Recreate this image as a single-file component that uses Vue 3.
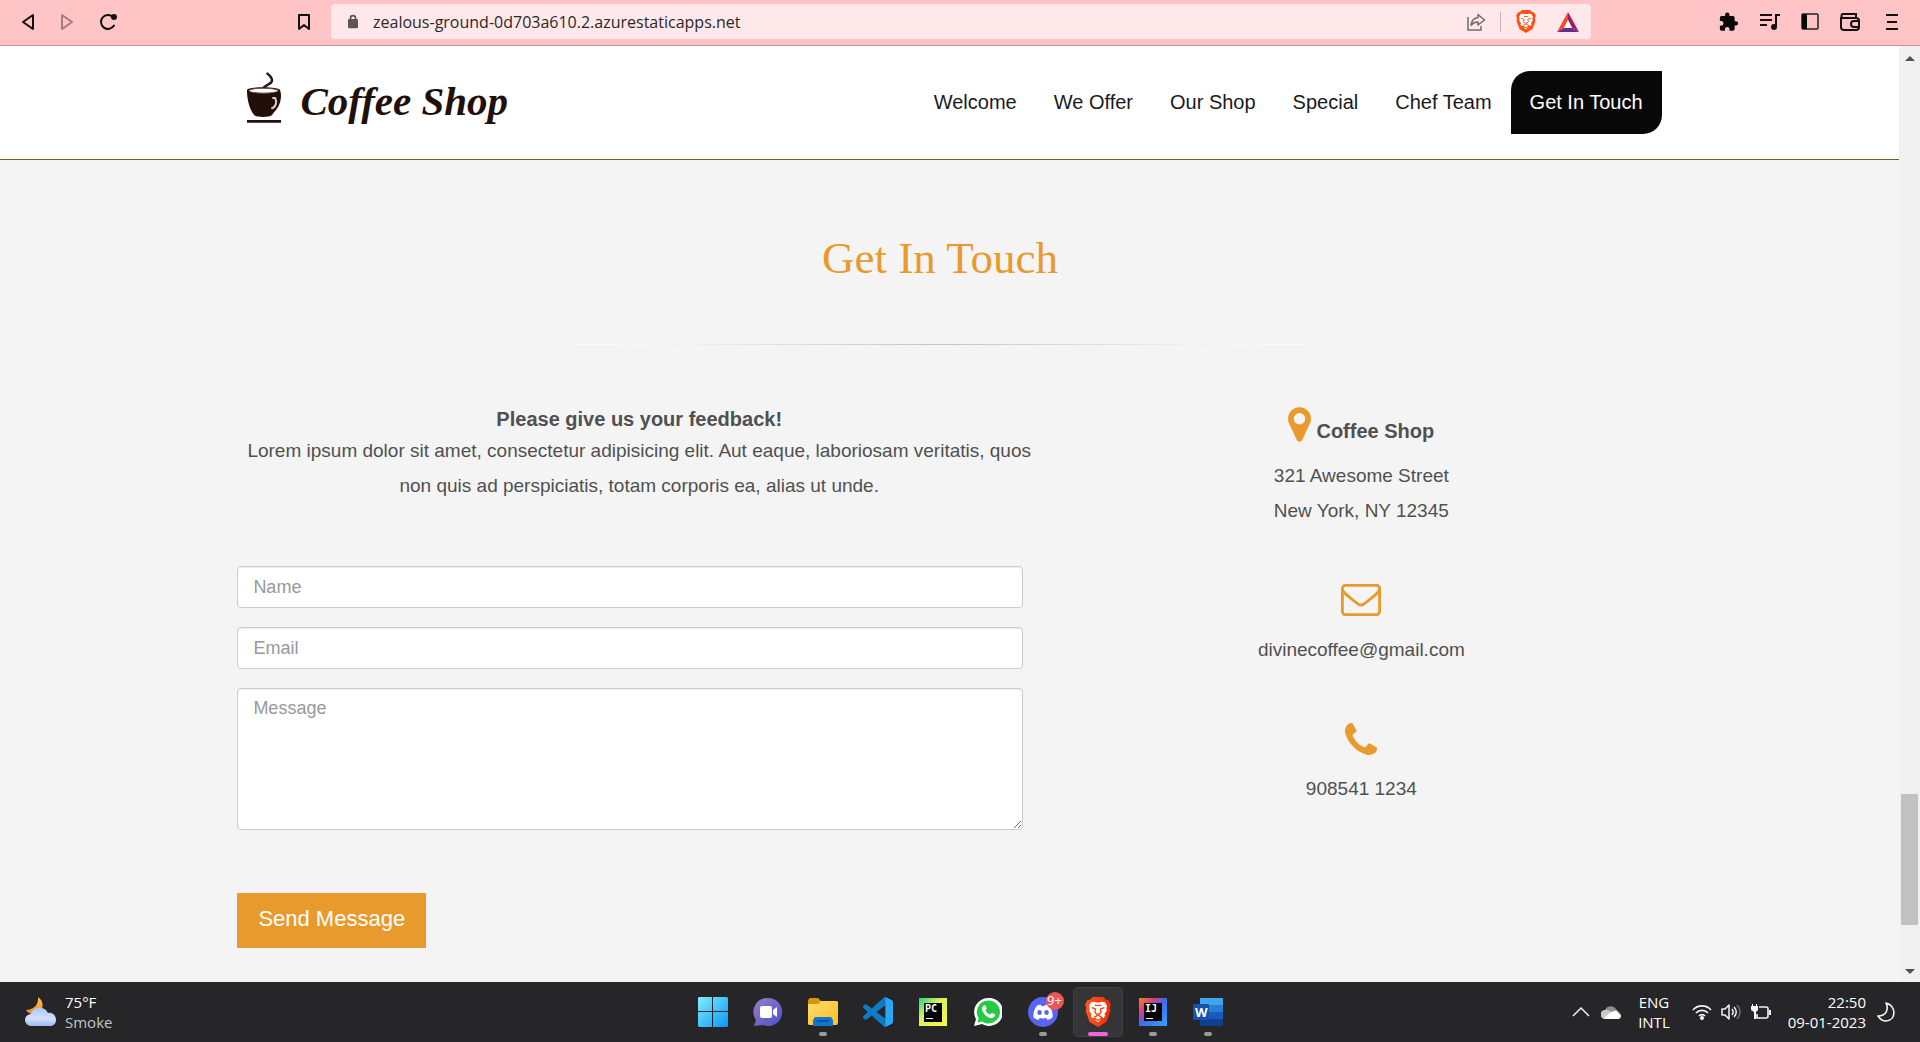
<script setup>
import { ref } from 'vue'

const address = ref('zealous-ground-0d703a610.2.azurestaticapps.net')
const form = ref({ name: '', email: '', message: '' })
const links = ['Welcome', 'We Offer', 'Our Shop', 'Special', 'Chef Team', 'Get In Touch']
const current = 'Get In Touch'
</script>

<template>
  <div class="screen">
    <svg class="defs" aria-hidden="true">
      <defs>
        <linearGradient id="winGrad" x1="0" y1="0" x2="1" y2="1"><stop offset="0" stop-color="#7ff0ff" /><stop offset="1" stop-color="#0a95f5" /></linearGradient>
        <linearGradient id="chatGrad" x1="0" y1="0" x2="1" y2="1"><stop offset="0" stop-color="#9a7fc4" /><stop offset="1" stop-color="#4a50c8" /></linearGradient>
        <linearGradient id="folderGrad" x1="0" y1="0" x2="1" y2="1"><stop offset="0" stop-color="#ffdc70" /><stop offset="1" stop-color="#fdbe22" /></linearGradient>
        <linearGradient id="pcGrad" x1="0" y1="0" x2="1" y2="1"><stop offset="0" stop-color="#21d789" /><stop offset=".4" stop-color="#d8f05a" /><stop offset="1" stop-color="#fcf84a" /></linearGradient>
        <linearGradient id="ijGrad" x1="0" y1="0" x2="1" y2="1"><stop offset="0" stop-color="#fc801d" /><stop offset=".3" stop-color="#d63b8c" /><stop offset=".5" stop-color="#3b6cf0" /><stop offset="1" stop-color="#3aa0ff" /></linearGradient>
        <linearGradient id="braveGrad" x1="0" y1="0" x2="1" y2="0"><stop offset="0" stop-color="#ff5a1f" /><stop offset="1" stop-color="#f42a05" /></linearGradient>
        <linearGradient id="cloudGrad" x1="0" y1="0" x2="0" y2="1"><stop offset="0" stop-color="#a9c6f7" /><stop offset=".6" stop-color="#d3e0fb" /><stop offset="1" stop-color="#9db9ee" /></linearGradient>
        <linearGradient id="moonGrad" x1="0" y1="0" x2="0" y2="1"><stop offset="0" stop-color="#f9c24e" /><stop offset="1" stop-color="#f18a2b" /></linearGradient>
        <symbol id="lion" viewBox="0 0 24 28">
          <path fill="#fff" d="M8 4.500 12 5.300l4-.8 2.500.5 2 3.500-.8 2 .5 2-2.200 3.500.8 1.500-1.800 2-2-.8-1.500 1 1.500 1.300L12 23.500l-3-2 1.500-1.500-1.500-1-2 .8-1.800-2 .8-1.500L3.800 12.500l.5-2-.8-2L5.500 5z" />
          <path fill="none" stroke="currentColor" stroke-width="1.200" d="m6 10 3.800 1.200L9 14l2 2.500M18 10l-3.800 1.200L15 14l-2 2.500M9 7.500l3 .6 3-.6M8.500 18.800 12 17l3.500 1.800M12 17v-2M9.500 20.600l2.500 1.200 2.500-1.200" />
        </symbol>
      </defs>
    </svg>

    <header class="toolbar">
      <div class="toolbar-nav">
        <button class="icon-btn" aria-label="Back"><svg width="14" height="18" viewBox="0 0 14 18"><path d="M12 2v14L2 9z" fill="none" stroke="#111" stroke-width="2" stroke-linejoin="round" /></svg></button>
        <button class="icon-btn" aria-label="Forward"><svg width="14" height="18" viewBox="0 0 14 18"><path d="M2 2v14l10-7z" fill="none" stroke="#a57b7f" stroke-width="2" stroke-linejoin="round" /></svg></button>
        <button class="icon-btn" aria-label="Reload"><svg width="18" height="18" viewBox="0 0 18 18"><path d="M15 12.500A7 7 0 1 1 14 4" fill="none" stroke="#111" stroke-width="2" stroke-linecap="round" /><circle cx="15" cy="4" r="3" fill="#111" /></svg></button>
      </div>
      <button class="icon-btn" aria-label="Bookmark this page"><svg width="14" height="18" viewBox="0 0 14 18"><path d="M2 2h10v14l-5-4-5 4z" fill="none" stroke="#111" stroke-width="2" stroke-linejoin="round" /></svg></button>
      <div class="address">
        <svg width="10" height="15" viewBox="0 0 12 16"><rect y="5" width="12" height="11" rx="1" fill="#5b5558" /><path d="M3 6V4a3 3 0 0 1 6 0v2" fill="none" stroke="#5b5558" stroke-width="2" /></svg>
        <input v-model="address" class="address-input" type="text" aria-label="Address" />
        <button class="icon-btn" aria-label="Share"><svg width="20" height="20" viewBox="0 0 20 20" fill="none" stroke="#75696b" stroke-width="1.500"><path d="M2 5v13h13v-4" /><path d="M12 2.500 18.500 8 12 13v-3c-3 0-5 .8-7 3.200C5.500 9 8 6 12 5.500z" stroke-linejoin="round" /></svg></button>
        <span class="address-sep"></span>
        <button class="icon-btn" aria-label="Brave Shields"><svg width="20" height="23" viewBox="0 0 24 28" color="#fb542b"><path fill="#fb5210" d="m7 0h10l2.500 2.500L22 3l2 4-1 3 .5 3-3.500 10-8 5-8-5L.5 13 1 10 0 7l2-4 2.500-.5z" /><use href="#lion" /></svg></button>
        <button class="icon-btn" aria-label="Brave Rewards"><svg width="22" height="20" viewBox="0 0 22 20"><path fill="#ff4724" d="M11 0 0 20l7-4 4-8z" /><path fill="#9e1f63" d="m11 0 11 20-7-4-4-8z" /><path fill="#662d91" d="M0 20h22l-7-4H7z" /><path fill="#fff" d="m11 8 4 8H7z" /></svg></button>
      </div>
      <div class="toolbar-tools">
        <button class="icon-btn" aria-label="Extensions"><svg width="20" height="20" viewBox="1 1 23 22"><path fill="#080808" d="M20.500 11H19V7a2 2 0 0 0-2-2h-4V3.500a2.500 2.500 0 0 0-5 0V5H4a2 2 0 0 0-2 2v3.800h1.500a2.700 2.700 0 0 1 0 5.400H2V20a2 2 0 0 0 2 2h3.800v-1.500a2.700 2.700 0 0 1 5.400 0V22H17a2 2 0 0 0 2-2v-4h1.500a2.500 2.500 0 0 0 0-5z" /></svg></button>
        <button class="icon-btn" aria-label="Media controls"><svg width="20" height="18" viewBox="0 0 20 18"><path d="M0 2h12M0 7h12M0 12h7M20 2h-4v11" fill="none" stroke="#111" stroke-width="2" /><circle cx="14" cy="14" r="3" fill="#111" /></svg></button>
        <button class="icon-btn" aria-label="Sidebar"><svg width="18" height="17" viewBox="0 0 18 17"><rect x="1" y="1" width="16" height="15" rx="1" fill="none" stroke="#222" stroke-width="1.500" /><path d="M1 1h5v15H1z" fill="#080808" /></svg></button>
        <button class="icon-btn" aria-label="Wallet"><svg width="20" height="18" viewBox="0 0 20 18" fill="none" stroke="#111" stroke-width="2"><path d="M1 4v10a3 3 0 0 0 3 3h12a3 3 0 0 0 3-3V8a3 3 0 0 0-3-3H3C1 5 1 1 3 1h13v4" /><path d="M19 8h-5a3 3 0 0 0 0 6h5" /></svg></button>
        <button class="icon-btn" aria-label="Menu"><svg width="12" height="18" viewBox="0 0 12 18"><path d="M0 2h12M1 9h10M0 16h12" stroke="#111" stroke-width="2" /></svg></button>
      </div>
    </header>

    <div class="viewport">
      <div class="page">
        <div class="site-header">
          <div class="container site-bar">
            <a class="logo" href="#">
              <svg width="37" height="52" viewBox="0 0 38 52"><path d="M22 1c5 4 7 8 1 11-4 2-5 3-6 5" fill="none" stroke="#2a1612" stroke-width="2.500" stroke-linecap="round" /><path fill="#210f0a" d="M1 18c0-4 34-4 34 0 2 5 1 14-4 20-2 2-3 4-5 6-3 2-14 2-17 0C4 39 1 28 1 18z" /><ellipse cx="18" cy="18.500" rx="15" ry="2.500" fill="#fff" stroke="#5d4a45" /><path d="M27 26h3c2 4 1 9-4 11" fill="none" stroke="#d9cfcc" stroke-width="2" /><path d="M1 50h35" stroke="#210f0a" stroke-width="3" /></svg>
              <span>Coffee Shop</span>
            </a>
            <nav class="menu">
              <a v-for="link in links" :key="link" href="#" :class="{ active: link === current }">{{ link }}</a>
            </nav>
          </div>
        </div>

        <section class="container contact">
          <h1>Get In Touch</h1>
          <hr />
          <div class="columns">
            <div class="feedback">
              <h2>Please give us your feedback!</h2>
              <p>Lorem ipsum dolor sit amet, consectetur adipisicing elit. Aut eaque, laboriosam veritatis, quos non quis ad perspiciatis, totam corporis ea, alias ut unde.</p>
              <form @submit.prevent>
                <input v-model="form.name" type="text" placeholder="Name" aria-label="Name" />
                <input v-model="form.email" type="email" placeholder="Email" aria-label="Email" />
                <textarea v-model="form.message" placeholder="Message" aria-label="Message"></textarea>
                <button class="send" type="submit">Send Message</button>
              </form>
            </div>
            <address class="details">
              <div class="detail">
                <div class="place">
                  <svg width="23" height="35" viewBox="384 128 1024 1536"><path fill="#e99a2c" d="M1152 640q0-106-75-181t-181-75-181 75-75 181 75 181 181 75 181-75 75-181zm256 0q0 109-33 179l-364 774q-16 33-47 52t-68 19-68-19-46-52L417 819q-33-70-33-179 0-212 150-362t362-150 362 150 150 362z" /></svg>
                  <strong>Coffee Shop</strong>
                </div>
                <p>321 Awesome Street<br />New York, NY 12345</p>
              </div>
              <div class="detail">
                <svg width="40" height="32" viewBox="0 0 40 32" fill="none" stroke="#e99a2c" stroke-width="2.800"><rect x="1.400" y="1.400" width="37.200" height="29.200" rx="3" /><path d="M1.500 6c2 4 8 8 13 12 4 4 7 4 11 0 5-4 11-8 13-12" /></svg>
                <p>divinecoffee@gmail.com</p>
              </div>
              <div class="detail">
                <svg width="32" height="32" viewBox="192 128 1408 1408"><path fill="#e99a2c" d="M1600 1240q0 27-10 70.500t-21 68.500q-21 50-122 106-94 51-186 51-27 0-53-3.500t-57.500-12.500-47-14.500-55.500-20.500-49-18q-98-35-175-83-127-79-264-216t-216-264q-48-77-83-175-3-9-18-49t-20.500-55.500-14.500-47-12.500-57.500-3.500-53q0-92 51-186 56-101 106-122 25-11 68.500-21t70.500-10q14 0 21 3 18 6 53 76 11 19 30 54t35 63.500 31 53.500q3 4 17.500 25t21.500 35.500 7 28.500q0 20-28.500 50t-62 55-62 53-28.500 46q0 9 5 22.500t8.500 20.500 14 24 11.500 19q76 137 174 235t235 174q2 1 19 11.500t24 14 20.500 8.500 22.500 5q18 0 46-28.500t53-62 55-62 50-28.500q14 0 28.500 7t35.500 21.500 25 17.500q25 15 53.500 31t63.500 35 54 30q70 35 76 53 3 7 3 21z" /></svg>
                <p>908541 1234</p>
              </div>
            </address>
          </div>
        </section>
      </div>
      <div class="scrollbar">
        <svg width="10" height="6" viewBox="0 0 10 6"><path d="m0 6 5-5 5 5z" fill="#505050" /></svg>
        <div class="track"><div class="thumb"></div></div>
        <svg width="10" height="6" viewBox="0 0 10 6"><path d="m0 0 5 5 5-5z" fill="#505050" /></svg>
      </div>
    </div>

    <footer class="taskbar">
      <button class="weather">
        <svg width="32" height="30" viewBox="0 0 32 30"><path fill="url(#moonGrad)" d="M13 0c6 4 6 12 1 15-4 3-10 3-13-2 7 0 13-5 12-13z" /><path fill="url(#cloudGrad)" d="M6 29a6 6 0 0 1 0-12c2-8 14-8 17-1 5-1 8 3 8 7s-3 6-6 6z" /></svg>
        <span>75°F<br /><small>Smoke</small></span>
      </button>
      <div class="apps">
        <button class="app" aria-label="Start"><svg width="30" height="30" viewBox="0 0 30 30"><path fill="url(#winGrad)" d="M1 0h13v14H0V1zM15 0h14l1 1v13H15zM0 15h14v15H1l-1-1zM15 15h15v14l-1 1H15z" /></svg></button>
        <button class="app" aria-label="Chat"><svg width="30" height="30" viewBox="0 0 30 30"><path fill="url(#chatGrad)" d="M15 1a14 14 0 1 1-5 27L1 29l2-6A14 14 0 0 1 15 1z" /><rect x="7" y="9" width="12" height="12" rx="2" fill="#fff" /><path fill="#fff" d="m20 13 4-3v10l-4-3z" /></svg></button>
        <button class="app running" aria-label="File Explorer"><svg width="30" height="28" viewBox="0 0 30 28"><path fill="#d9960d" d="M0 2 2 0h8l3 3h15v5H0z" /><path fill="url(#folderGrad)" d="M0 6h10l3-3h16l1 1v21l-1 2H1l-1-1z" /><path fill="#1276cd" d="M5 28v-6l2-3h16l2 3v6z" /><path d="M9 23h12" stroke="#074a8c" stroke-width="1.500" /></svg></button>
        <button class="app" aria-label="Visual Studio Code"><svg width="30" height="30" viewBox="0 0 24 24"><path fill="#0f7ac5" d="M23.150 2.587 18.210.21a1.500 1.500 0 0 0-1.705.29l-9.460 8.630-4.120-3.128a1 1 0 0 0-1.276.057L.327 7.261A1 1 0 0 0 .326 8.740L3.899 12 .326 15.260a1 1 0 0 0 .001 1.479L1.650 17.940a1 1 0 0 0 1.276.057l4.120-3.128 9.460 8.630a1.500 1.500 0 0 0 1.704.290l4.942-2.377A1.500 1.500 0 0 0 24 20.060V3.939a1.500 1.500 0 0 0-.850-1.352zm-5.146 14.861L10.826 12l7.178-5.448z" /><path fill="#2aa8f2" d="M18 0.200 23.150 2.600 24 4v16l-.85 1.400L18 23.800z" /></svg></button>
        <button class="app" aria-label="PyCharm"><svg width="28" height="28" viewBox="0 0 28 28"><path fill="url(#pcGrad)" d="M0 0h28v28H0z" /><path d="M5 5h18v19H5z" /><path fill="#fff" d="M7 20h7v1H7z" /><text x="6" y="14" class="tile-mark">PC</text></svg></button>
        <button class="app" aria-label="WhatsApp"><svg width="28" height="28" viewBox="0 0 28 28"><path fill="#fff" d="M14 0a14 14 0 1 1-6 26l-8 2 2-7A14 14 0 0 1 14 0z" /><path fill="#26c943" d="M14 2.500a11.500 11.500 0 1 1-6 21l-4.500 1.200 1.200-4.400A11.500 11.500 0 0 1 14 2.500z" /><path fill="#fff" d="M9.500 7.500c1-.6 1.800-.4 2.200.5l1 2.500c0 .8-1.300 1.500-1.200 2 1 2 2.500 3.300 4.500 4 .7 0 1.200-1.700 2-1.500l2.600 1.300c.8.400.4 2-.3 2.700-2 1.800-4.300 1.300-7-.3-2.700-1.800-4.300-4-5-6-.5-2 0-4 1.200-5.200z" /></svg></button>
        <button class="app running" aria-label="Discord"><svg width="30" height="30" viewBox="0 0 30 30"><circle cx="15" cy="15" r="15" fill="#5765f2" /><path fill="#fff" d="M9 8.500 12.500 7.500l1 1.500h3l1-1.500L21 8.500c3 4 4 8 3.500 12-2 1.500-3.500 2-5 2.500l-1.200-2c-2 .5-4.600.5-6.600 0l-1.200 2c-1.500-.5-3-1-5-2.500C5 16.500 6 12.500 9 8.500zM11.500 13a2.200 2.500 0 1 0 .1 0zm7 0a2.200 2.500 0 1 0 .1 0z" /></svg><span class="badge">9+</span></button>
        <button class="app running focused" aria-label="Brave"><svg width="26" height="30" viewBox="0 0 24 28" color="#f9400f"><path fill="url(#braveGrad)" d="m7 0h10l2.500 2.500L22 3l2 4-1 3 .5 3-3.500 10-8 5-8-5L.5 13 1 10 0 7l2-4 2.500-.5z" /><use href="#lion" /></svg></button>
        <button class="app running" aria-label="IntelliJ IDEA"><svg width="28" height="28" viewBox="0 0 28 28"><path fill="url(#ijGrad)" d="M0 0h28v28H0z" /><path d="M5 5h18v18H5z" /><path fill="#fff" d="M7 20h7v1H7z" /><text x="6" y="14" class="tile-mark">IJ</text></svg></button>
        <button class="app running" aria-label="Word"><svg width="30" height="28" viewBox="0 0 30 28"><path fill="#41a5ee" d="M7 0h23v7H7z" /><path fill="#2b7cd3" d="M7 7h23v7H7z" /><path fill="#185abd" d="M7 14h23v7H7z" /><path fill="#103f91" d="M7 21h23v7H7z" /><rect y="6" width="16" height="16" rx="1" fill="#1651ab" /><text x="2" y="19" class="word-mark">W</text></svg></button>
      </div>
      <div class="tray">
        <button class="icon-btn" aria-label="Show hidden icons"><svg width="18" height="10" viewBox="0 0 18 10"><path d="m1 9 8-8 8 8" fill="none" stroke="#eee" stroke-width="1.500" /></svg></button>
        <button class="icon-btn onedrive" aria-label="OneDrive"><svg width="20" height="14" viewBox="0 0 20 14"><path fill="#8d8d8f" d="M4 8a6 6 0 0 1 11-4l4 4z" /><path fill="#c9c9cb" d="M4 14a4 4 0 0 1 0-9c4-1 6 2 9 4l-4 5z" /><path fill="#fff" d="M3 13c4-3 6-6 10-7 3-1 4 1 4 2 4 0 4 6 0 6H4z" /></svg></button>
        <button class="language">ENG<br />INTL</button>
        <button class="icon-btn status" aria-label="Network, volume and battery">
          <svg width="20" height="16" viewBox="0 0 20 16" fill="none" stroke="#f4f4f4" stroke-width="1.700"><path d="M1 6a12 12 0 0 1 18 0M4 9a8 8 0 0 1 12 0M7 12a4 4 0 0 1 6 0" /><circle cx="10" cy="14" r="1.200" fill="#fff" /></svg>
          <svg width="21" height="18" viewBox="0 0 21 18" fill="none" stroke="#f4f4f4" stroke-width="1.500"><path d="M1 6h3l4-4v14l-4-4H1z" stroke-linejoin="round" /><path d="M11 6c1.500 2 1.500 4 0 6M13 4c3 3 3 7 0 10" /><path d="M16 2c4 4 4 10 0 14" stroke="#6f6f72" /></svg>
          <svg width="20" height="18" viewBox="0 0 20 18" fill="none" stroke="#f4f4f4" stroke-width="1.600"><path d="M8 4h7a2 2 0 0 1 2 2v7a2 2 0 0 1-2 2H6v-4" /><path fill="#f4f4f4" stroke="none" d="M1 1h1v2h3V1h1v2h1v4L5 9v7H3V9L0 7V3h1zM18 7h2v5h-2z" /></svg>
        </button>
        <button class="clock"><time>22:50<br />09-01-2023</time></button>
        <button class="icon-btn" aria-label="Focus assist"><svg width="18" height="20" viewBox="0 0 18 20"><path d="M9 1c10 2 11 17 0 18-4 0-6-2-8-5 8 0 11-6 8-13z" fill="none" stroke="#f4f4f4" stroke-width="1.600" stroke-linejoin="round" /></svg></button>
      </div>
    </footer>
  </div>
</template>

<style>
body { margin: 0; }
</style>

<style scoped>
.screen { display: flex; flex-direction: column; height: 100vh; overflow: hidden; font-family: "Liberation Sans", Arial, sans-serif; }
.screen * { box-sizing: border-box; }
.defs { position: absolute; width: 0; height: 0; overflow: hidden; }
svg { display: block; flex: none; }
button { font: inherit; color: inherit; background: none; border: 0; padding: 0; }
a { text-decoration: none; color: inherit; }

.toolbar { display: flex; align-items: center; flex: none; height: 46px; padding: 0 22px 2px 21px; background: #ffc4c6; border-bottom: 1px solid #c58f95; }
.toolbar-nav { display: flex; gap: 25px; margin-right: 180px; }
.address { display: flex; align-items: center; flex: 1; height: 35px; margin-left: 20px; margin-right: 128px; padding: 0 12px 0 17px; background: #ffe8e9; border-radius: 4px; }
.address-input { flex: 1; min-width: 0; margin-left: 15px; padding: 0; border: 0; outline: 0; background: none; color: #2d2729; font: 16px/24px "Open Sans", "Noto Sans", sans-serif; }
.address-sep { width: 1px; height: 20px; margin: 0 15px 0 14px; background: #c9b3b5; }
.address .icon-btn + .icon-btn { margin-left: 21px; }
.toolbar-tools { display: flex; align-items: center; gap: 21px; }
.toolbar-tools .icon-btn:last-child { margin-left: 5px; }

.viewport { display: flex; flex: 1; min-height: 0; }
.page { flex: 1; min-width: 0; overflow: hidden; background: #f4f4f4; color: #505050; }
.container { width: 75%; min-width: 1100px; margin: 0 auto; }
.site-header { background: #fff; border-bottom: 1px solid #735c22; }
.site-bar { display: flex; justify-content: space-between; padding: 25px 0; }
.logo { display: flex; align-items: flex-start; gap: 17px; margin-left: 9px; padding-top: 1px; color: #210f0a; font: italic bold 41px/48px "Liberation Serif", "Times New Roman", serif; }
.logo span { padding-top: 5px; }
.menu { display: flex; }
.menu a { height: 63px; padding: 0 19px 0 18px; color: #1a1a1a; font-size: 20px; line-height: 62px; white-space: nowrap; }
.menu .active { padding-left: 19px; background: #080808; color: #fff; border-radius: 19px 0; }

.contact { padding: 73px 19px 0 0; }
h1 { margin: 0; color: #e99a2c; font: 45px/50px "Liberation Serif", "Times New Roman", serif; text-align: center; }
hr { width: 724px; height: 1px; margin: 61px auto 60px; border: 0; background: linear-gradient(to right, #fff, #f4f4f4 12%, #c4c4c4 50%, #f4f4f4 88%, #fff); }
.columns { display: flex; gap: 39px; }
.feedback { flex: 10; }
h2 { margin: 0; font-size: 20px; line-height: 28px; text-align: center; }
p { margin: 0; font-size: 19px; line-height: 35px; text-align: center; }
form { display: flex; flex-direction: column; gap: 19px; margin: 63px 18px 0 0; }
form input, textarea { display: block; width: 100%; border: 1px solid #ccc; border-radius: 4px; background: #fff; box-shadow: inset 0 1px 1px #00000013; color: #505050; font: 18px/25px "Liberation Sans", Arial, sans-serif; }
form input { height: 42px; padding: 0 15px; }
textarea { height: 142px; padding: 7px 15px; resize: vertical; }
form ::placeholder { color: #999; }
.send { align-self: flex-start; height: 55px; margin-top: 44px; padding: 0 21px 4px; background: #e99a2c; color: #fff; font-size: 22px; }
.details { flex: 7; padding-top: 2px; font-style: normal; }
.detail { display: flex; flex-direction: column; align-items: center; gap: 16px; margin-bottom: 56px; }
.place { display: flex; align-items: flex-end; gap: 5px; }
.place strong { font-size: 20px; line-height: 22px; }

.scrollbar { display: flex; flex-direction: column; align-items: center; flex: none; width: 21px; padding: 9px 0 7px; background: #f1f1f1; }
.track { display: flex; flex-direction: column; justify-content: flex-end; flex: 1; width: 17px; padding-bottom: 44px; }
.thumb { height: 131px; background: #c1c1c1; }

.taskbar { display: grid; grid-template-columns: 1fr auto 1fr; align-items: center; flex: none; height: 60px; background: #262628; color: #fff; font: 15px/20px "Open Sans", "Noto Sans", sans-serif; }
.weather { display: flex; align-items: center; gap: 8px; padding-left: 25px; text-align: left; }
.weather small { color: #c4c4c6; font-size: 15px; }
.apps { display: flex; gap: 5px; }
.app { position: relative; display: flex; align-items: center; justify-content: center; width: 50px; height: 50px; border-radius: 5px; }
.running::after { content: ""; position: absolute; bottom: 1px; width: 8px; height: 4px; border-radius: 2px; background: #9b9b9d; }
.focused { background: #353537; box-shadow: inset 0 0 0 1px #3f3f42; }
.focused::after { width: 20px; background: #f066d8; }
.badge { position: absolute; top: 5px; right: 4px; width: 18px; height: 18px; border-radius: 9px; background: #ee5457; font-size: 13px; line-height: 17px; text-align: center; }
.tile-mark { fill: #fff; font: bold 10px "DejaVu Sans Mono", monospace; }
.word-mark { fill: #fff; font: bold 13px "Open Sans", sans-serif; }
.tray { display: flex; align-items: center; justify-content: flex-end; padding-right: 25px; }
.onedrive { margin: 0 17px 0 11px; }
.language { text-align: center; }
.status { display: flex; align-items: center; gap: 9px; margin-left: 22px; }
.clock { margin: 0 11px 0 17px; text-align: right; }
</style>
